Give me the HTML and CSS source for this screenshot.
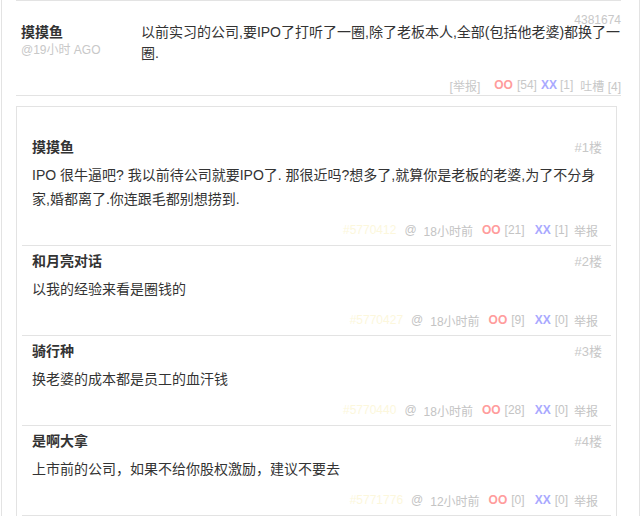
FILE: index.html
```html
<!DOCTYPE html>
<html lang="zh-CN">
<head>
<meta charset="utf-8">
<title>吐槽</title>
<link rel="stylesheet" href="styles.css">
</head>
<body>
<div class="page">
  <div class="post">
    <div class="post-id">4381674</div>
    <div class="post-main">
      <div class="author">
        <div class="author-name">摸摸鱼</div>
        <div class="author-time">@19小时 AGO</div>
      </div>
      <div class="post-text">以前实习的公司,要IPO了打听了一圈,除了老板本人,全部(包括他老婆)都换了一圈.</div>
    </div>
    <div class="post-foot">
      <span class="report">[举报]</span>
      <span class="oo">OO</span><span class="cnt">[54]</span>
      <span class="xx">XX</span><span class="cnt">[1]</span>
      <span class="tucao">吐槽 [4]</span>
    </div>
  </div>

  <div class="comments">
    <ul class="comment-list">
      <li class="comment">
        <div class="c-head"><span class="c-name">摸摸鱼</span><span class="c-floor">#1楼</span></div>
        <div class="c-text">IPO 很牛逼吧? 我以前待公司就要IPO了. 那很近吗?想多了,就算你是老板的老婆,为了不分身家,婚都离了.你连跟毛都别想捞到.</div>
        <div class="c-foot">
          <span class="c-id">#5770412</span><span class="c-at">@</span><span class="c-time">18小时前</span><span class="oo">OO</span><span class="cnt cnt-oo">[21]</span><span class="xx">XX</span><span class="cnt cnt-xx">[1]</span><span class="c-report">举报</span>
        </div>
      </li>
      <li class="comment">
        <div class="c-head"><span class="c-name">和月亮对话</span><span class="c-floor">#2楼</span></div>
        <div class="c-text">以我的经验来看是圈钱的</div>
        <div class="c-foot">
          <span class="c-id">#5770427</span><span class="c-at">@</span><span class="c-time">18小时前</span><span class="oo">OO</span><span class="cnt cnt-oo">[9]</span><span class="xx">XX</span><span class="cnt cnt-xx">[0]</span><span class="c-report">举报</span>
        </div>
      </li>
      <li class="comment">
        <div class="c-head"><span class="c-name">骑行种</span><span class="c-floor">#3楼</span></div>
        <div class="c-text">换老婆的成本都是员工的血汗钱</div>
        <div class="c-foot">
          <span class="c-id">#5770440</span><span class="c-at">@</span><span class="c-time">18小时前</span><span class="oo">OO</span><span class="cnt cnt-oo">[28]</span><span class="xx">XX</span><span class="cnt cnt-xx">[0]</span><span class="c-report">举报</span>
        </div>
      </li>
      <li class="comment">
        <div class="c-head"><span class="c-name">是啊大拿</span><span class="c-floor">#4楼</span></div>
        <div class="c-text">上市前的公司，如果不给你股权激励，建议不要去</div>
        <div class="c-foot">
          <span class="c-id">#5771776</span><span class="c-at">@</span><span class="c-time">12小时前</span><span class="oo">OO</span><span class="cnt cnt-oo">[0]</span><span class="xx">XX</span><span class="cnt cnt-xx">[0]</span><span class="c-report">举报</span>
        </div>
      </li>
    </ul>
  </div>
</div>
</body>
</html>
```

FILE: styles.css
```css
html, body {
  margin: 0;
  padding: 0;
  background: #fff;
}
body {
  font-family: "Liberation Sans", "Noto Sans CJK SC", sans-serif;
  color: #333;
  overflow: hidden;
}
.page {
  margin-left: 1px;
  width: 623px;
  min-height: 516px;
  border-left: 1px solid #e3e3e3;
  border-right: 1px solid #e3e3e3;
  padding-left: 14px;
  box-sizing: content-box;
}
.post {
  width: 605px;
  border-top: 1px solid #e3e3e3;
  border-bottom: 1px solid #e3e3e3;
  padding-top: 14px;
  box-sizing: border-box;
  height: 96px;
}
.post-id {
  height: 7px;
  line-height: 10px;
  font-size: 12px;
  color: #c8c8c8;
  text-align: right;
}
.post-main {
  display: flex;
  height: 42px;
}
.author {
  width: 120px;
  padding-left: 5px;
  flex: none;
}
.author-name {
  font-size: 14px;
  font-weight: bold;
  line-height: 21px;
  color: #333;
}
.author-time {
  font-size: 12px;
  line-height: 14px;
  color: #c8c8c8;
}
.post-text {
  flex: 1;
  font-size: 14px;
  line-height: 21px;
  color: #333;
}
.post-foot {
  margin-top: 11px;
  display: flex;
  justify-content: flex-end;
  align-items: center;
  height: 20px;
  font-size: 12px;
  color: #c8c8c8;
}
.report { margin-right: 14px; }
.oo {
  color: #ff9c9c;
  font-weight: bold;
  margin-right: 4px;
}
.xx {
  color: #a9a9ff;
  font-weight: bold;
  margin-right: 3px;
}
.post-foot .cnt { margin-right: 4px; }
.post-foot .tucao { margin-left: 3px; }

.comments {
  margin-top: 10px;
  width: 601px;
  border: 1px solid #e3e3e3;
  box-sizing: border-box;
  padding: 25px 5px 0;
}
.comment-list {
  list-style: none;
  margin: 0;
  padding: 0;
}
.comment {
  padding: 4px 9px 5px 10px;
  border-bottom: 1px solid #e3e3e3;
}
.c-head {
  display: flex;
  justify-content: space-between;
  align-items: center;
  height: 20px;
}
.c-name {
  font-size: 14px;
  font-weight: bold;
  color: #333;
}
.c-floor {
  font-size: 13px;
  color: #c8c8c8;
}
.c-text {
  margin: 7px 0 9px;
  font-size: 14px;
  line-height: 24px;
  color: #333;
}
.c-foot {
  display: flex;
  justify-content: flex-end;
  align-items: center;
  height: 20px;
  font-size: 12px;
  color: #c4c4c4;
  padding-right: 4px;
}
.c-id {
  color: #fcf7dc;
  margin-right: 8px;
}
.c-at { margin-right: 7px; }
.c-time { margin-right: 9px; }
.c-foot .oo { margin-right: 4px; }
.c-foot .cnt-oo { margin-right: 10px; }
.c-foot .xx { margin-right: 4px; }
.c-foot .cnt-xx { margin-right: 6px; }
```
